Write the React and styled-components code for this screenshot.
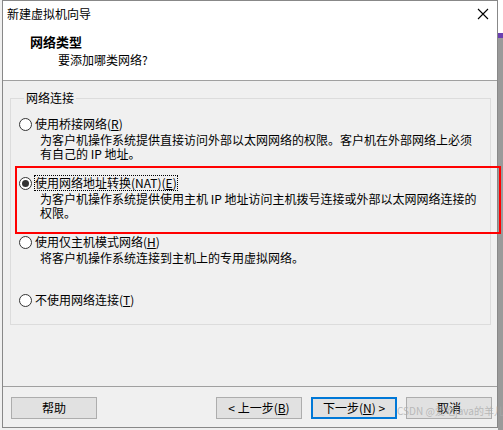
import styled, { createGlobalStyle } from "styled-components";

const GlobalStyle = createGlobalStyle`
  html, body {
    margin: 0;
    padding: 0;
    background: #f0f0f0;
  }
  body {
    font-family: "Noto Sans CJK SC", "Liberation Sans", sans-serif;
    font-size: 12px;
    color: #000;
  }
`;

const Page = styled.div`
  position: relative;
  width: 503px;
  height: 430px;
  overflow: hidden;
  display: flex;
  background: #f0f0f0;
`;

const Window = styled.div`
  margin-left: 2px;
  width: 496px;
  height: 428px;
  box-sizing: border-box;
  border: 1px solid #888;
  background: #f0f0f0;
  display: flex;
  flex-direction: column;
`;

const ScreenEdge = styled.div`
  flex: 1;
  background: linear-gradient(#fff 0 33px, #6a3fb0 33px 38px, #9a9a9a 38px);
`;

const TitleBar = styled.div`
  height: 25px;
  background: #fff;
  display: flex;
  align-items: center;
  justify-content: space-between;
  padding: 0 8px 0 4px;
  line-height: 14px;
`;

const CloseIcon = () => (
  <svg width="12" height="12" viewBox="0 0 12 12">
    <path d="M1 1 L11 11 M11 1 L1 11" stroke="#000" strokeWidth="1.1" />
  </svg>
);

const Header = styled.div`
  height: 54px;
  background: #fff;
  border-bottom: 1px solid #a0a0a0;
  padding-left: 27px;
  display: flex;
  flex-direction: column;
  justify-content: flex-start;
`;

const HeaderTitle = styled.div`
  font-weight: bold;
  font-size: 13px;
  line-height: 16px;
  margin-top: 8px;
`;

const HeaderSub = styled.div`
  line-height: 16px;
  margin-top: 2px;
  padding-left: 28px;
`;

const Body = styled.div`
  flex: 1;
  display: flex;
  flex-direction: column;
`;

const Content = styled.div`
  padding: 10px 6px 0 7px;
`;

const GroupBox = styled.fieldset`
  margin: 0;
  padding: 0 0 15px 8px;
  border: 1px solid #dcdcdc;
  min-width: 0;
`;

const Legend = styled.legend`
  padding: 0 2px;
  margin-left: 5px;
  line-height: 14px;
`;

const Option = styled.div`
  margin-top: ${(p) => p.$gap}px;
`;

const OptionRow = styled.div`
  display: flex;
  align-items: center;
  height: 18px;
`;

const Radio = styled.span`
  position: relative;
  width: 13px;
  height: 13px;
  box-sizing: border-box;
  border: 1px solid #333;
  border-radius: 50%;
  background: #fff;
  margin-right: 3px;
  flex: none;

  &::after {
    content: "";
    display: ${(p) => (p.$checked ? "block" : "none")};
    position: absolute;
    left: 2px;
    top: 2px;
    width: 7px;
    height: 7px;
    border-radius: 50%;
    background: #333;
  }
`;

const Label = styled.span`
  line-height: 14px;
  outline: ${(p) => (p.$focused ? "1px dotted #000" : "none")};
  outline-offset: 0;
`;

const Key = styled.span`
  text-decoration: underline;
  text-underline-offset: 1px;
`;

const Desc = styled.div`
  padding-left: 21px;
  line-height: 14px;
`;

const Spacer = styled.div`
  flex: 1;
`;

const Separator = styled.div`
  height: 1px;
  background: #a0a0a0;
`;

const Footer = styled.div`
  display: flex;
  padding: 10px 5px 8px 8px;
  gap: 9px;
`;

const Button = styled.div`
  width: 86px;
  height: 22px;
  box-sizing: border-box;
  border: ${(p) => (p.$default ? "2px solid #0078d7" : "1px solid #adadad")};
  background: #e1e1e1;
  display: flex;
  align-items: center;
  justify-content: center;
  line-height: 14px;
  margin-left: ${(p) => (p.$push ? "auto" : "0")};
`;

const Highlight = styled.div`
  position: absolute;
  left: 15px;
  top: 166px;
  width: 486px;
  height: 68px;
  box-sizing: border-box;
  border: 2px solid #ff0000;
  pointer-events: none;
`;

const Watermark = styled.div`
  position: absolute;
  left: 397px;
  top: 405px;
  font-size: 10px;
  line-height: 12px;
  color: rgba(170, 170, 170, 0.75);
  white-space: nowrap;
  pointer-events: none;
`;

const options = [
  {
    label: "使用桥接网络",
    key: "R",
    gap: 10,
    desc: [
      "为客户机操作系统提供直接访问外部以太网网络的权限。客户机在外部网络上必须",
      "有自己的 IP 地址。",
    ],
  },
  {
    label: "使用网络地址转换(NAT)",
    key: "E",
    gap: 13,
    checked: true,
    desc: [
      "为客户机操作系统提供使用主机 IP 地址访问主机拨号连接或外部以太网网络连接的",
      "权限。",
    ],
  },
  {
    label: "使用仅主机模式网络",
    key: "H",
    gap: 13,
    desc: ["将客户机操作系统连接到主机上的专用虚拟网络。"],
  },
  {
    label: "不使用网络连接",
    key: "T",
    gap: 26,
    desc: [],
  },
];

export default function App() {
  return (
    <>
      <GlobalStyle />
      <Page>
        <Window>
          <TitleBar>
            <span>新建虚拟机向导</span>
            <CloseIcon />
          </TitleBar>
          <Header>
            <HeaderTitle>网络类型</HeaderTitle>
            <HeaderSub>要添加哪类网络?</HeaderSub>
          </Header>
          <Body>
            <Content>
              <GroupBox>
                <Legend>网络连接</Legend>
                {options.map((o) => (
                  <Option key={o.key} $gap={o.gap}>
                    <OptionRow>
                      <Radio $checked={o.checked} />
                      <Label $focused={o.checked}>
                        {o.label}(<Key>{o.key}</Key>)
                      </Label>
                    </OptionRow>
                    {o.desc.map((line, i) => (
                      <Desc key={i}>{line}</Desc>
                    ))}
                  </Option>
                ))}
              </GroupBox>
            </Content>
            <Spacer />
            <Separator />
            <Footer>
              <Button>帮助</Button>
              <Button $push>
                &lt; 上一步(<Key>B</Key>)
              </Button>
              <Button $default>
                下一步(<Key>N</Key>) &gt;
              </Button>
              <Button>取消</Button>
            </Footer>
          </Body>
        </Window>
        <ScreenEdge />
        <Highlight />
        <Watermark>CSDN @爱吃java的羊儿</Watermark>
      </Page>
    </>
  );
}
